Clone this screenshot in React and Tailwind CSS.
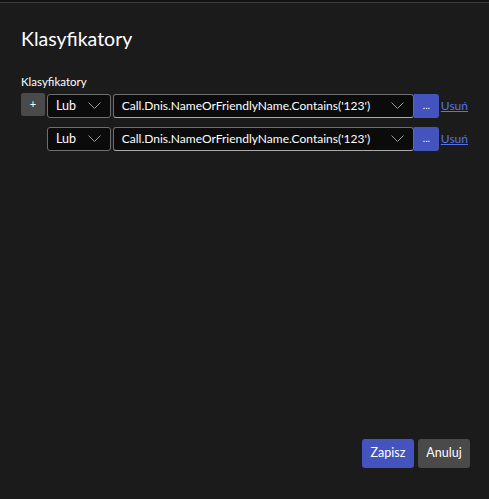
const expr = "Call.Dnis.NameOrFriendlyName.Contains('123')";

function Chevron() {
  return (
    <svg width="13" height="8" viewBox="0 0 13 8" className="shrink-0">
      <polyline points="0.5,0.5 6.5,6.5 12.5,0.5" fill="none" stroke="#9a9a9a" strokeWidth="1" />
    </svg>
  );
}

function Row({ first }) {
  return (
    <div className="flex items-center h-[24px]">
      {first ? (
        <button className="w-[24px] h-[23px] mr-[2px] bg-[#4a4a4a] rounded-[2px] text-white text-[11px] leading-none flex items-center justify-center pb-[3px] self-start -mt-[1px]">
          +
        </button>
      ) : (
        <div className="w-[26px]" />
      )}
      <div className="w-[64px] h-[24px] flex items-center justify-between pl-[8px] pr-[9px] bg-[#0b0b0b] border border-[#6e6e6e] rounded-[3px] text-[12.5px] text-white">
        <span>Lub</span>
        <Chevron />
      </div>
      <div className="ml-[2px] w-[302px] h-[24px] flex items-center justify-between pl-[8px] pr-[9px] bg-[#0b0b0b] border border-[#6e6e6e] border-b-[#aaaaaa] rounded-[3px] text-[12px] text-white">
        <span>{expr}</span>
        <Chevron />
      </div>
      <button className="w-[25px] h-[24px] bg-[#4453bd] rounded-r-[3px] text-white text-[10px] leading-none flex items-end justify-center pb-[8px]">
        ...
      </button>
      <a className="ml-[2px] text-[12px] text-[#5672e6] underline">Usuń</a>
    </div>
  );
}

export default function App() {
  return (
    <div
      className="w-[489px] h-[499px] bg-[#1b1b1b] flex flex-col"
      style={{ fontFamily: 'Lato, "Noto Sans", sans-serif' }}
    >
      <div className="h-[3px] bg-[#111111] border-b border-[#3d3d3d]" />
      <div className="flex-1 flex flex-col px-[21px]">
        <h1 className="mt-[22px] text-[19.5px] text-white leading-[28px]">
          Klasyfikatory
        </h1>
        <div className="mt-[21px] text-[11.5px] text-white leading-[16px]">
          Klasyfikatory
        </div>
        <div className="mt-[4px] flex flex-col gap-[9px]">
          <Row first />
          <Row />
        </div>
        <div className="mt-auto mb-[31px] flex justify-end gap-[4px] -mr-[2px]">
          <button className="w-[52px] h-[29px] bg-[#4453bd] rounded-[3px] text-white text-[12.5px]">
            Zapisz
          </button>
          <button className="w-[52px] h-[29px] bg-[#4a4a4a] rounded-[3px] text-white text-[12.5px]">
            Anuluj
          </button>
        </div>
      </div>
    </div>
  );
}
